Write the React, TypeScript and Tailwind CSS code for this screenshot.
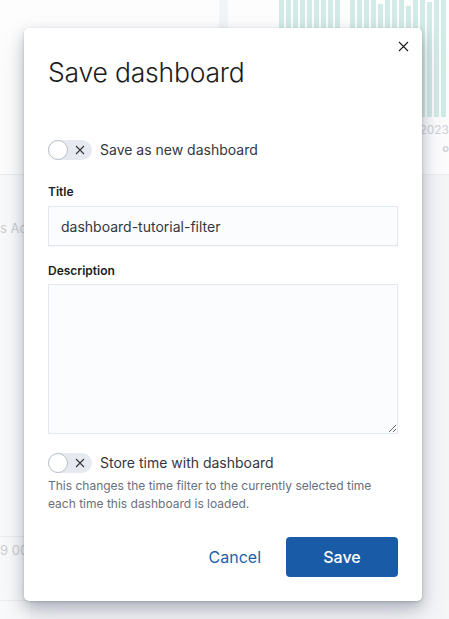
import { useState } from 'react'

const bars = [
  0, 0, 0, 0, 0, 0, 0, 0, 0, -1, 0, 0, 0, 0, 4, 0, 0, 0, 6, 0, 0, 2, 0, 0,
]

const Toggle = ({ label }: { label: string }) => {
  const [on, setOn] = useState(false)
  return (
    <button type="button" onClick={() => setOn(!on)} className="flex h-5 items-center gap-2 text-left">
      <span className="relative flex h-5 w-11 shrink-0 items-center rounded-full bg-[#e6e9f0]">
        <span className="absolute left-0 top-0 size-5 rounded-full border border-[#b9bfc9] bg-white" />
        <svg className="absolute left-[27px] top-[5px]" width="10" height="10" viewBox="0 0 10 10">
          <path d="M1 1L9 9M9 1L1 9" stroke="#343741" strokeWidth="1.1" fill="none" />
        </svg>
      </span>
      <span className="text-[14px] leading-5 text-[#343741]">{label}</span>
    </button>
  )
}

export default function App() {
  return (
    <div className="relative h-[619px] w-[449px] overflow-hidden bg-[#f7f8fa] font-['Inter','Noto_Sans',sans-serif]">
      {/* dashboard behind the overlay */}
      <div className="flex h-full flex-col">
        <div className="flex h-[175px] border-b border-[#eceef1]">
          <div className="w-[219px] bg-[#fdfdfd]" />
          <div className="w-[9px] bg-[#f3f4f6]" />
          <div className="flex flex-1 flex-col bg-[#fdfdfe] pl-[51px]">
            <div className="flex h-[117px] items-stretch gap-[2px]">
              {bars.map((b, i) =>
                b < 0 ? (
                  <div key={i} className="w-[6px]" />
                ) : (
                  <div key={i} className="flex w-[5px] flex-col">
                    <div style={{ height: b }} />
                    <div className="flex-1 bg-[#d3ebe7]" />
                  </div>
                ),
              )}
            </div>
            <div className="flex justify-end overflow-hidden pt-[5px] text-[12px] leading-4 text-[#cfd2d6]">
              <span className="whitespace-nowrap">2023</span>
            </div>
            <div className="flex justify-end pt-[2px] text-[11px] font-bold leading-4 text-[#d3d6da]">
              <span>o</span>
            </div>
          </div>
        </div>
        <div className="flex flex-1">
          <div className="flex w-[30px] flex-col overflow-hidden bg-[#f9fafb]">
            <div className="mt-[45px] whitespace-nowrap text-[13px] leading-4 text-[#cdd0d4]">s Ac</div>
            <div className="mt-[300px] h-px bg-[#eceef1]" />
            <div className="mt-[5px] whitespace-nowrap text-[13px] leading-4 text-[#cdd0d4]">9 00</div>
            <div className="mt-[42px] h-px bg-[#eceef1]" />
          </div>
          <div className="flex-1 bg-[#f5f6f8]" />
        </div>
      </div>

      {/* modal */}
      <div className="absolute left-[24px] top-[28px] flex w-[398px] flex-col rounded-[5px] bg-white px-6 pb-6 pt-[28px] shadow-[0_1px_3px_rgba(0,0,0,0.15),0_6px_14px_rgba(40,50,80,0.26),0_14px_30px_rgba(40,50,80,0.14)]">
        <button type="button" className="absolute right-[11px] top-[10px] flex size-4 items-center justify-center">
          <svg width="11" height="11" viewBox="0 0 11 11">
            <path d="M1 1L10 10M10 1L1 10" stroke="#1a1c21" strokeWidth="1.1" fill="none" />
          </svg>
        </button>

        <h1 className="text-[26.5px] font-light leading-8 tracking-[-0.2px] text-[#1a1c21]">Save dashboard</h1>

        <div className="mt-[52px]">
          <Toggle label="Save as new dashboard" />
        </div>

        <label className="mt-6 text-[12px] font-semibold leading-4 text-[#1a1c21]">Title</label>
        <input
          className="mt-[6px] h-10 w-full border border-[#e3e7ef] bg-[#fbfcfd] px-3 text-[14px] text-[#343741] outline-none shadow-[0_1px_1px_rgba(0,0,0,0.03)]"
          defaultValue="dashboard-tutorial-filter"
        />

        <label className="mt-[17px] text-[12px] font-semibold leading-4 text-[#1a1c21]">Description</label>
        <textarea className="mt-[5px] h-[150px] w-full border border-[#e3e7ef] bg-[#fbfcfd] px-3 py-2 text-[14px] text-[#343741] outline-none" />

        <div className="mt-[19px]">
          <Toggle label="Store time with dashboard" />
        </div>
        <p className="mt-1 text-[12px] leading-[18px] text-[#69707d]">
          This changes the time filter to the currently selected time each time this dashboard is loaded.
        </p>

        <div className="mt-6 flex items-center justify-end gap-[13px]">
          <button type="button" className="h-10 px-3 text-[16px] text-[#1d5fae]">
            Cancel
          </button>
          <button
            type="button"
            className="h-10 w-[112px] rounded-[4px] bg-[#1a5ba8] text-[16px] font-medium text-white"
          >
            Save
          </button>
        </div>
      </div>
    </div>
  )
}
